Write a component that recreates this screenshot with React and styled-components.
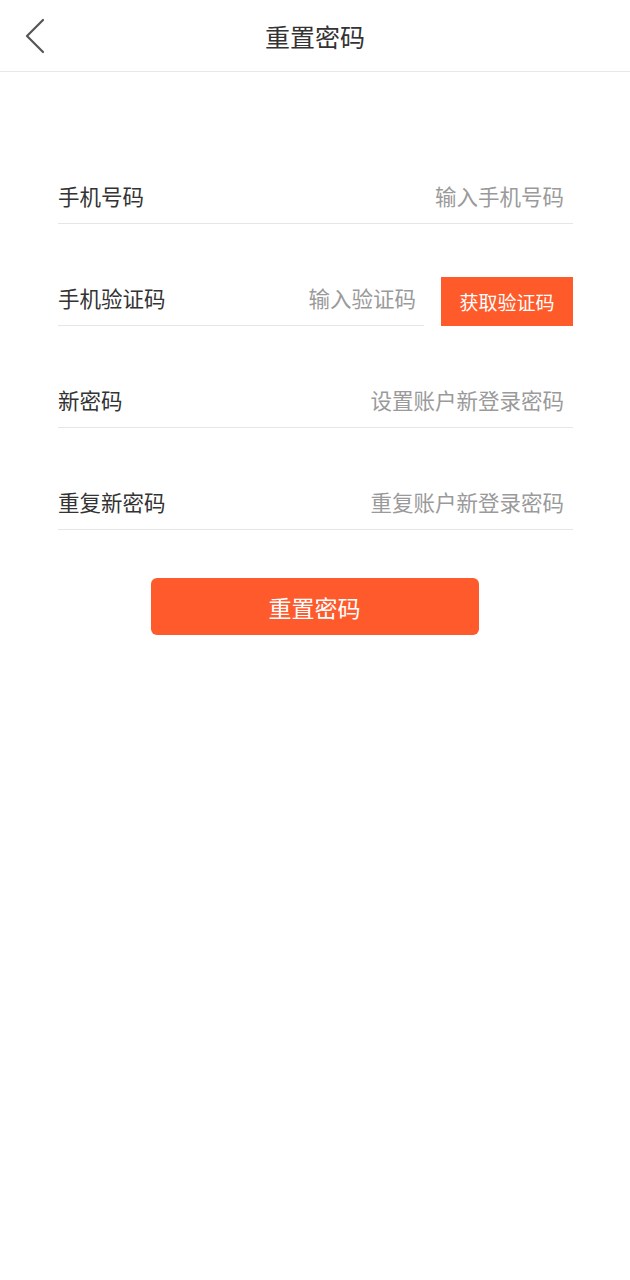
import React from "react";
import styled, { createGlobalStyle } from "styled-components";

const GlobalStyle = createGlobalStyle`
  html, body {
    margin: 0;
    padding: 0;
    background: #fff;
    font-family: "Noto Sans CJK SC", "Noto Sans", sans-serif;
  }
  * { box-sizing: border-box; }
`;

const Header = styled.div`
  position: relative;
  height: 72px;
  display: flex;
  align-items: center;
  justify-content: center;
  border-bottom: 1px solid #e8e8e8;
  h1 {
    margin: 0;
    font-size: 25px;
    font-weight: 400;
    color: #333;
  }
`;

const Back = styled.button`
  position: absolute;
  left: 20px;
  top: 16px;
  width: 30px;
  height: 40px;
  border: none;
  background: none;
  padding: 0;
  display: flex;
  align-items: center;
  justify-content: center;
`;

const Form = styled.div`
  display: flex;
  flex-direction: column;
  gap: 50px;
  padding: 100px 57px 0 58px;
`;

const Row = styled.div`
  display: flex;
  align-items: stretch;
  gap: 17px;
`;

const Field = styled.label`
  flex: 1;
  height: 52px;
  padding-bottom: 4px;
  display: flex;
  align-items: center;
  border-bottom: 1px solid #e6e6e6;
  span {
    font-size: 21.5px;
    color: #333;
    white-space: nowrap;
  }
  input {
    flex: 1;
    min-width: 0;
    border: none;
    outline: none;
    background: none;
    text-align: right;
    padding-right: ${(p) => p.$pr || 9}px;
    font-family: inherit;
    font-size: 21.5px;
    color: #333;
    &::placeholder {
      color: #9a9a9a;
    }
  }
`;

const CodeButton = styled.button`
  width: 132px;
  height: 49px;
  margin-top: 3px;
  border: none;
  background: #ff5a2a;
  color: #fff;
  font-family: inherit;
  font-size: 19px;
`;

const Submit = styled.button`
  align-self: center;
  width: 328px;
  height: 57px;
  margin-top: -2px;
  margin-left: -2px;
  border: none;
  border-radius: 6px;
  background: #ff5a2c;
  color: #fff;
  font-family: inherit;
  font-size: 23px;
`;

const fields = [
  { label: "手机号码", placeholder: "输入手机号码" },
  { label: "手机验证码", placeholder: "输入验证码", code: true },
  { label: "新密码", placeholder: "设置账户新登录密码" },
  { label: "重复新密码", placeholder: "重复账户新登录密码" },
];

export default function App() {
  return (
    <>
      <GlobalStyle />
      <Header>
        <Back>
          <svg width="22" height="36" viewBox="0 0 22 36">
            <path d="M19 2 L3 18 L19 34" fill="none" stroke="#555" strokeWidth="2.2" strokeLinecap="round" strokeLinejoin="round" />
          </svg>
        </Back>
        <h1>重置密码</h1>
      </Header>
      <Form>
        {fields.map((f) => (
          <Row key={f.label}>
            <Field $pr={f.code ? 8 : 9}>
              <span>{f.label}</span>
              <input placeholder={f.placeholder} type={f.label.includes("密码") ? "password" : "text"} />
            </Field>
            {f.code && <CodeButton>获取验证码</CodeButton>}
          </Row>
        ))}
        <Submit>重置密码</Submit>
      </Form>
    </>
  );
}
